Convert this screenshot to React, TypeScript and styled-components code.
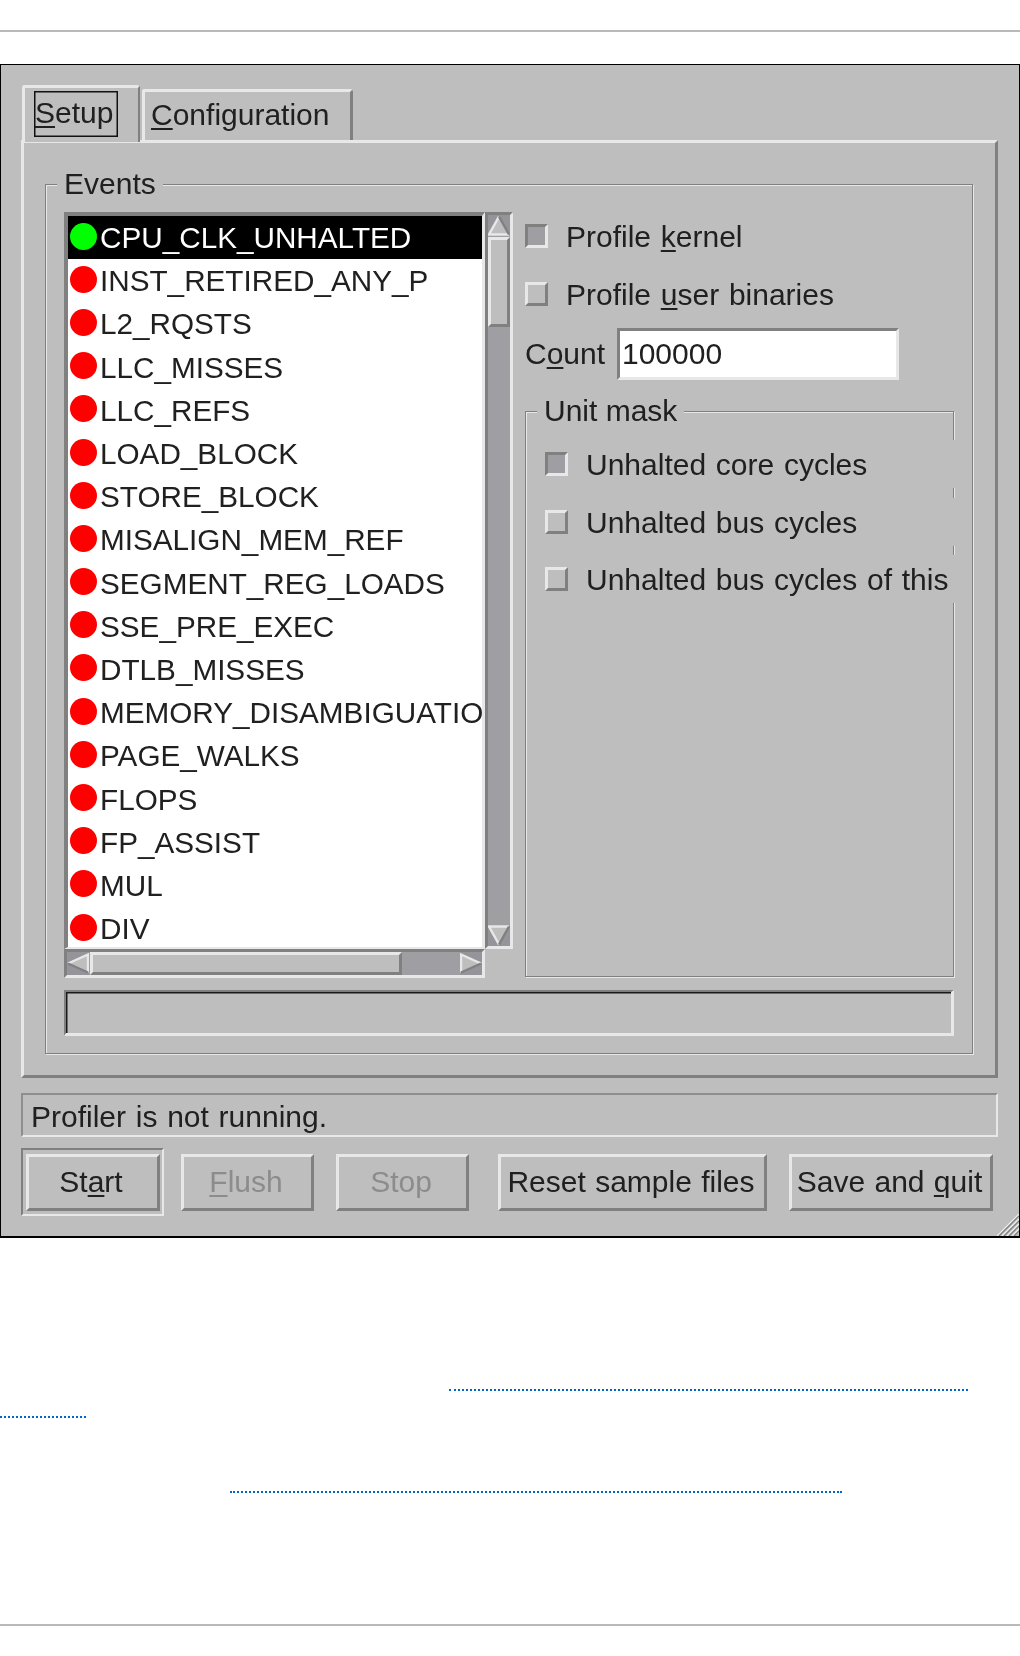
import React from "react";
import styled, { createGlobalStyle } from "styled-components";

const BG = "#bebebe";
const LIGHT = "#e8e8e8";
const DARK = "#808080";
const TROUGH = "#9f9fa3";
const TEXT = "#202020";

const events: string[] = [
  "CPU_CLK_UNHALTED",
  "INST_RETIRED_ANY_P",
  "L2_RQSTS",
  "LLC_MISSES",
  "LLC_REFS",
  "LOAD_BLOCK",
  "STORE_BLOCK",
  "MISALIGN_MEM_REF",
  "SEGMENT_REG_LOADS",
  "SSE_PRE_EXEC",
  "DTLB_MISSES",
  "MEMORY_DISAMBIGUATION",
  "PAGE_WALKS",
  "FLOPS",
  "FP_ASSIST",
  "MUL",
  "DIV",
];

const GlobalStyle = createGlobalStyle`
  html, body {
    margin: 0;
    padding: 0;
    background: #fff;
  }
  * {
    box-sizing: border-box;
  }
`;

function Arrow({ dir }: { dir: "up" | "down" | "left" | "right" }) {
  const shapes = {
    up: { pts: "11,1 1,19 21,19", light: "11,1 1,19 21,19", dark: "21,19 11,1" },
    down: { pts: "1,1 21,1 11,19", light: "11,19 1,1 21,1", dark: "21,1 11,19" },
    left: { pts: "1,10 21,1 21,19", light: "1,10 21,1 21,19", dark: "21,19 1,10" },
    right: { pts: "1,1 21,10 1,19", light: "21,10 1,1 1,19", dark: "1,19 21,10" },
  }[dir];
  return (
    <ArrowSvg viewBox="0 0 22 20">
      <polygon points={shapes.pts} fill={BG} />
      <polyline points={shapes.light} fill="none" stroke={LIGHT} strokeWidth="2.4" />
      <polyline points={shapes.dark} fill="none" stroke={DARK} strokeWidth="2.4" />
    </ArrowSvg>
  );
}

function App() {
  return (
    <Page>
      <GlobalStyle />
      <Rule />
      <Window>
        <TabBar>
          <ActiveTab>
            <FocusRect>
              <Mnemonic>S</Mnemonic>etup
            </FocusRect>
          </ActiveTab>
          <Tab>
            <Mnemonic>C</Mnemonic>onfiguration
          </Tab>
        </TabBar>
        <Pane>
          <EventsGroup>
            <Legend>Events</Legend>
            <TopRow>
              <ListGrid>
                <ListBox>
                  {events.map((name, i) => (
                    <Row key={name} $selected={i === 0}>
                      <Dot $on={i === 0} />
                      <RowText>{name}</RowText>
                    </Row>
                  ))}
                </ListBox>
                <VScroll>
                  <VArrowBox>
                    <Arrow dir="up" />
                  </VArrowBox>
                  <VSlider />
                  <ScrollFill />
                  <VArrowBox>
                    <Arrow dir="down" />
                  </VArrowBox>
                </VScroll>
                <HScroll>
                  <HArrowBox>
                    <Arrow dir="left" />
                  </HArrowBox>
                  <HSlider />
                  <ScrollFill />
                  <HArrowBox>
                    <Arrow dir="right" />
                  </HArrowBox>
                </HScroll>
              </ListGrid>
              <SideColumn>
                <CheckRow>
                  <CheckBox $checked />
                  <CheckLabel>
                    Profile <Mnemonic>k</Mnemonic>ernel
                  </CheckLabel>
                </CheckRow>
                <CheckRow>
                  <CheckBox />
                  <CheckLabel>
                    Profile <Mnemonic>u</Mnemonic>ser binaries
                  </CheckLabel>
                </CheckRow>
                <CountRow>
                  <span>
                    C<Mnemonic>o</Mnemonic>unt
                  </span>
                  <CountField>100000</CountField>
                </CountRow>
                <UnitGroup>
                  <Legend>Unit mask</Legend>
                  <UnitRow>
                    <CheckBox $checked />
                    <CheckLabel>Unhalted core cycles</CheckLabel>
                  </UnitRow>
                  <UnitRow>
                    <CheckBox />
                    <CheckLabel>Unhalted bus cycles</CheckLabel>
                  </UnitRow>
                  <UnitRow>
                    <CheckBox />
                    <CheckLabel>Unhalted bus cycles of this</CheckLabel>
                  </UnitRow>
                </UnitGroup>
              </SideColumn>
            </TopRow>
            <Progress />
          </EventsGroup>
        </Pane>
        <Status>Profiler is not running.</Status>
        <ButtonRow>
          <DefaultFrame>
            <Button $w={134}>
              <span>
                St<Mnemonic>a</Mnemonic>rt
              </span>
            </Button>
          </DefaultFrame>
          <Button $w={133} $ml={17} $disabled>
            <span>
              <Mnemonic>F</Mnemonic>lush
            </span>
          </Button>
          <Button $w={133} $ml={22} $disabled>
            Stop
          </Button>
          <Button $w={269} $ml={29}>
            Reset sample files
          </Button>
          <Button $w={204} $ml={22}>
            <span>
              Save and <Mnemonic>q</Mnemonic>uit
            </span>
          </Button>
        </ButtonRow>
        <Grip viewBox="0 0 22 22">
          {[0, 5, 10, 15].map((o) => (
            <g key={o}>
              <line x1={22} y1={o} x2={o} y2={22} stroke="#f2f2f2" strokeWidth="1.2" />
              <line x1={22} y1={o + 2} x2={o + 2} y2={22} stroke={DARK} strokeWidth="1.2" />
            </g>
          ))}
        </Grip>
      </Window>
      <LinkLine $left={449} $width={519} $top={151} />
      <LinkLine $left={0} $width={86} $top={25} />
      <LinkLine $left={230} $width={612} $top={73} />
      <Rule $top={131} />
    </Page>
  );
}

const Page = styled.div`
  width: 1020px;
  height: 1656px;
  padding-top: 30px;
  overflow: hidden;
  font-family: "Liberation Sans", Arial, sans-serif;
  font-size: 30px;
  color: ${TEXT};
`;

const Rule = styled.div<{ $top?: number }>`
  height: 2px;
  margin-top: ${(p) => p.$top ?? 0}px;
  background: #b9b9b9;
`;

const Window = styled.div`
  position: relative;
  display: flex;
  flex-direction: column;
  width: 1020px;
  height: 1174px;
  margin-top: 32px;
  padding: 20px 21px 0 20px;
  background: ${BG};
  border: 1px solid #000;
  border-bottom-width: 2px;
  filter: blur(0.5px);
`;

const TabBar = styled.div`
  display: flex;
  align-items: flex-end;
  height: 55px;
  padding-left: 1px;
`;

const ActiveTab = styled.div`
  position: relative;
  z-index: 1;
  width: 118px;
  height: 57px;
  margin-bottom: -2px;
  padding: 3px 0 0 9px;
  background: ${BG};
  border-top: 3px solid ${LIGHT};
  border-left: 3px solid ${LIGHT};
  border-right: 2px solid ${DARK};
  border-radius: 3px 3px 0 0;
`;

const FocusRect = styled.div`
  display: flex;
  align-items: center;
  width: 84px;
  height: 46px;
  padding-bottom: 2px;
  border: 1px solid #111;
  box-shadow: inset 0 0 0 0.5px #111;
`;

const Tab = styled.div`
  display: flex;
  align-items: center;
  width: 211px;
  height: 51px;
  margin-left: 2px;
  padding: 0 0 2px 6px;
  border-top: 3px solid ${LIGHT};
  border-left: 3px solid ${LIGHT};
  border-right: 3px solid ${DARK};
  border-radius: 3px 3px 0 0;
`;

const Mnemonic = styled.span`
  text-decoration: underline;
  text-decoration-thickness: 2px;
  text-underline-offset: 3px;
`;

const Pane = styled.div`
  width: 977px;
  height: 938px;
  padding: 41px 22px 20px 21px;
  border-top: 3px solid ${LIGHT};
  border-left: 3px solid ${LIGHT};
  border-right: 3px solid ${DARK};
  border-bottom: 3px solid ${DARK};
`;

const EventsGroup = styled.div`
  position: relative;
  height: 870px;
  padding: 27px 18px 19px 18px;
  border: 1px solid ${DARK};
  box-shadow: inset 1px 1px 0 ${LIGHT}, 1px 1px 0 ${LIGHT};
`;

const Legend = styled.div`
  position: absolute;
  top: -21px;
  left: 11px;
  height: 40px;
  padding: 0 7px;
  line-height: 40px;
  background: ${BG};
`;

const TopRow = styled.div`
  display: flex;
  gap: 12px;
`;

const ListGrid = styled.div`
  display: grid;
  grid-template-columns: 421px 28px;
  grid-template-rows: 737px 29px;
  width: 449px;
`;

const ListBox = styled.div`
  overflow: hidden;
  background: #fff;
  border-top: 4px solid ${DARK};
  border-left: 4px solid ${DARK};
  border-right: 3px solid ${LIGHT};
  border-bottom: 2px solid ${LIGHT};
`;

const Row = styled.div<{ $selected?: boolean }>`
  display: flex;
  align-items: center;
  height: 43.2px;
  padding-left: 2px;
  font-size: 29.7px;
  white-space: nowrap;
  color: ${(p) => (p.$selected ? "#fff" : TEXT)};
  background: ${(p) => (p.$selected ? "#000" : "transparent")};
`;

const Dot = styled.div<{ $on?: boolean }>`
  flex: none;
  width: 27px;
  height: 27px;
  margin-top: -3px;
  border-radius: 50%;
  background: ${(p) => (p.$on ? "#00ff00" : "#ff0000")};
`;

const RowText = styled.span`
  margin-left: 3px;
  padding-top: 1px;
`;

const ScrollFill = styled.div`
  flex: 1;
`;

const VScroll = styled.div`
  display: flex;
  flex-direction: column;
  background: ${TROUGH};
  border-top: 3px solid ${DARK};
  border-left: 3px solid ${DARK};
  border-right: 3px solid ${LIGHT};
  border-bottom: 3px solid ${LIGHT};
`;

const VArrowBox = styled.div`
  display: flex;
  flex: none;
  height: 21px;
  background: #94949a;
`;

const ArrowSvg = styled.svg`
  display: block;
  width: 100%;
  height: 100%;
`;

const VSlider = styled.div`
  flex: none;
  height: 90px;
  margin-top: 1px;
  background: ${BG};
  border-top: 3px solid ${LIGHT};
  border-left: 3px solid ${LIGHT};
  border-right: 3px solid ${DARK};
  border-bottom: 3px solid ${DARK};
`;

const HScroll = styled.div`
  display: flex;
  grid-column: 1 / span 1;
  background: ${TROUGH};
  border-top: 3px solid ${DARK};
  border-left: 3px solid ${DARK};
  border-right: 3px solid ${LIGHT};
  border-bottom: 3px solid ${LIGHT};
`;

const HArrowBox = styled.div`
  display: flex;
  flex: none;
  width: 22px;
  background: #94949a;
`;

const HSlider = styled.div`
  flex: none;
  width: 312px;
  margin-left: 1px;
  background: ${BG};
  border-top: 3px solid ${LIGHT};
  border-left: 3px solid ${LIGHT};
  border-right: 3px solid ${DARK};
  border-bottom: 3px solid ${DARK};
`;

const SideColumn = styled.div`
  display: flex;
  flex-direction: column;
  width: 429px;
`;

const CheckRow = styled.div`
  display: flex;
  align-items: center;
  flex: none;
  gap: 18px;
  height: 48px;
  margin-bottom: 9.5px;
  white-space: nowrap;
`;

const CheckLabel = styled.span`
  padding-top: 2px;
  word-spacing: 1.4px;
`;

const CheckBox = styled.div<{ $checked?: boolean }>`
  flex: none;
  width: 23px;
  height: 24px;
  background: ${(p) => (p.$checked ? TROUGH : BG)};
  border-style: solid;
  border-width: 3px;
  border-color: ${(p) =>
    p.$checked
      ? `${DARK} ${LIGHT} ${LIGHT} ${DARK}`
      : `${LIGHT} ${DARK} ${DARK} ${LIGHT}`};
`;

const CountRow = styled.div`
  display: flex;
  align-items: center;
  justify-content: space-between;
  width: 374px;
  height: 52px;
  margin-top: 1px;
`;

const CountField = styled.div`
  display: flex;
  align-items: center;
  width: 282px;
  height: 52px;
  padding-left: 2px;
  background: #fff;
  border-top: 3px solid ${DARK};
  border-left: 3px solid ${DARK};
  border-right: 3px solid ${LIGHT};
  border-bottom: 3px solid ${LIGHT};
`;

const UnitGroup = styled.div`
  position: relative;
  display: flex;
  flex-direction: column;
  height: 566px;
  margin-top: 31px;
  padding: 28px 0 0 19px;
  border: 1px solid ${DARK};
  box-shadow: inset 1px 1px 0 ${LIGHT}, 1px 1px 0 ${LIGHT};
`;

const UnitRow = styled(CheckRow)`
  position: relative;
  margin-right: -3px;
  background: ${BG};
`;

const Progress = styled.div`
  height: 46px;
  margin-top: 12px;
  border-top: 2px solid ${DARK};
  border-left: 2px solid ${DARK};
  border-right: 3px solid ${LIGHT};
  border-bottom: 3px solid ${LIGHT};
  box-shadow: inset 1.5px 1.5px 0 #1a1a1a;
`;

const Status = styled.div`
  display: flex;
  align-items: center;
  flex: none;
  width: 977px;
  height: 44px;
  margin-top: 15px;
  padding: 3px 0 0 8px;
  word-spacing: 1.4px;
  border-top: 2px solid #8e8e8e;
  border-left: 2px solid #8e8e8e;
  border-right: 2px solid ${LIGHT};
  border-bottom: 2px solid ${LIGHT};
`;

const ButtonRow = styled.div`
  display: flex;
  align-items: center;
  margin-top: 11px;
`;

const DefaultFrame = styled.div`
  display: flex;
  align-items: center;
  justify-content: center;
  width: 143px;
  height: 68px;
  border-top: 2px solid ${DARK};
  border-left: 2px solid ${DARK};
  border-right: 2px solid ${LIGHT};
  border-bottom: 2px solid ${LIGHT};
`;

const Button = styled.div<{ $w: number; $ml?: number; $disabled?: boolean }>`
  display: flex;
  align-items: center;
  justify-content: center;
  flex: none;
  width: ${(p) => p.$w}px;
  height: 57px;
  margin-left: ${(p) => p.$ml ?? 0}px;
  padding-right: 3px;
  white-space: nowrap;
  word-spacing: 1px;
  color: ${(p) => (p.$disabled ? "#8c8c8c" : TEXT)};
  border-top: 3px solid ${LIGHT};
  border-left: 3px solid ${LIGHT};
  border-right: 3px solid ${DARK};
  border-bottom: 3px solid ${DARK};
`;

const Grip = styled.svg`
  position: absolute;
  right: 0;
  bottom: 0;
  width: 22px;
  height: 22px;
`;

const LinkLine = styled.div<{ $left: number; $width: number; $top: number }>`
  width: ${(p) => p.$width}px;
  margin-left: ${(p) => p.$left}px;
  margin-top: ${(p) => p.$top}px;
  border-top: 2px dotted #0066cc;
`;

export default App;
